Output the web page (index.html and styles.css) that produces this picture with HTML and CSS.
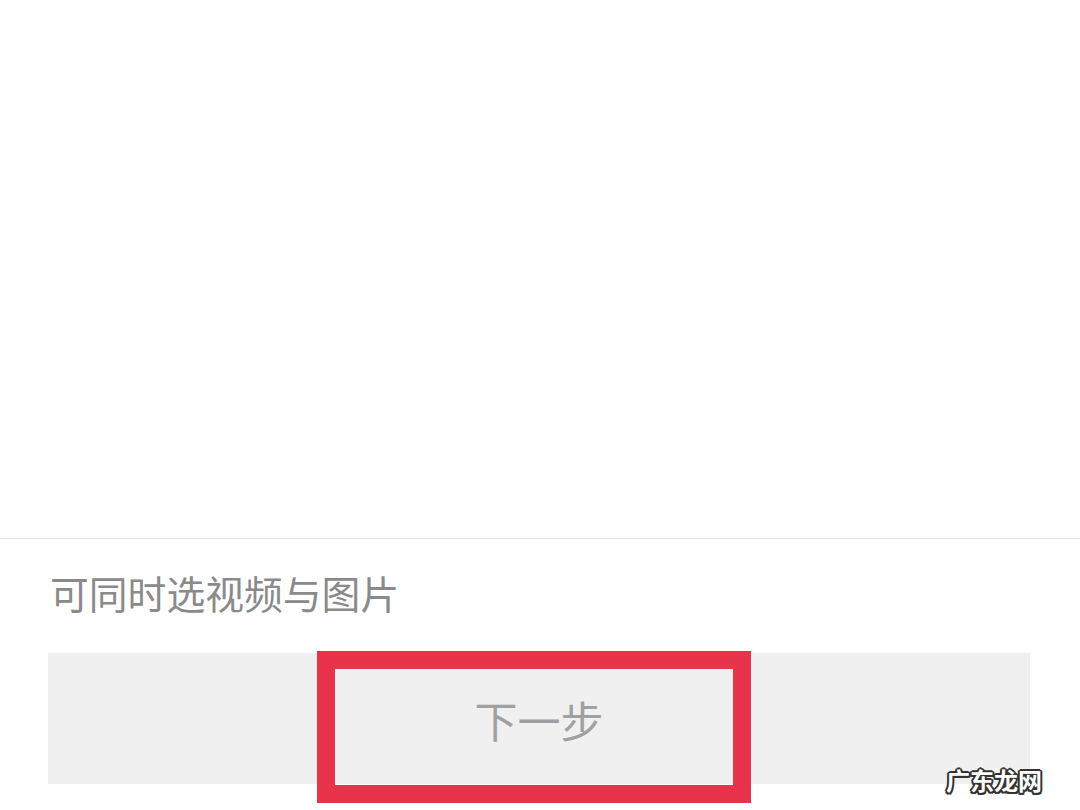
FILE: index.html
```html
<!DOCTYPE html>
<html lang="zh-CN">
<head>
    <meta charset="UTF-8">
    <meta name="viewport" content="width=device-width, initial-scale=1.0">
    <title>选择</title>
    <link rel="stylesheet" href="styles.css">
</head>
<body>

    <div class="screen">
        <div class="gallery"></div>

        <div class="footer">
            <p class="hint">可同时选视频与图片</p>
            <div class="next-wrap">
                <button class="next" type="button">下一步</button>
                <span class="highlight"></span>
            </div>
        </div>

        <span class="watermark">广东龙网</span>
    </div>

</body>
</html>
```

FILE: styles.css
```css
body {
    margin: 0;
    background-color: #fff;
    font-family: "Noto Sans CJK SC", "Noto Sans", sans-serif;
}
.screen {
    position: relative;
    width: 1080px;
    height: 810px;
    overflow: hidden;
    background: #fff;
}
.gallery {
    height: 538px;
}
.footer {
    border-top: 1px solid #e4e4e4;
    padding: 0 50px 0 48px;
}
.hint {
    margin: 0;
    padding-top: 34px;
    padding-left: 2px;
    font-size: 38.8px;
    line-height: 39px;
    color: #8a8a8a;
}
.next-wrap {
    position: relative;
    margin-top: 41px;
}
.next {
    display: block;
    width: 100%;
    height: 131px;
    border: none;
    background-color: #f0f0f0;
    color: #a0a0a0;
    font-family: inherit;
    font-size: 43px;
    padding: 0;
}
.highlight {
    position: absolute;
    left: 269px;
    top: -2px;
    width: 434px;
    height: 152px;
    border: 18px solid #e8334a;
    box-sizing: border-box;
}
.watermark {
    position: absolute;
    left: 946px;
    top: 765px;
    font-size: 24px;
    font-weight: bold;
    line-height: 30px;
    color: #fff;
    text-shadow:
        2px 0 0 #333, -2px 0 0 #333, 0 2px 0 #333, 0 -2px 0 #333,
        1.5px 1.5px 0 #333, -1.5px -1.5px 0 #333, 1.5px -1.5px 0 #333, -1.5px 1.5px 0 #333;
}
```
